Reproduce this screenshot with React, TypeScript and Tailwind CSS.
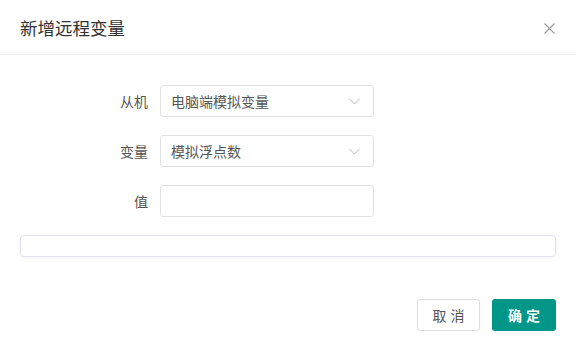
const font = { fontFamily: '"Noto Sans CJK SC", "Noto Sans", sans-serif' };

type RowProps = {
  label: string;
  value?: string;
  select?: boolean;
};

const Chevron = () => (
  <svg width="11" height="7" viewBox="0 0 11 7" className="text-[#b8b8b8]">
    <path d="M0.5 1 L5.5 6 L10.5 1" fill="none" stroke="currentColor" strokeWidth="1" />
  </svg>
);

const FormRow = ({ label, value, select }: RowProps) => (
  <div className="flex items-center">
    <label className="w-[128px] text-right text-[14px] text-[#555]">{label}</label>
    <div className="ml-3 flex h-[32px] w-[214px] items-center justify-between rounded-[3px] border border-[#e2e2e2] bg-white pl-[10px] pr-[13px]">
      <span className="text-[14px] text-[#555]">{value ?? ""}</span>
      {select && <Chevron />}
    </div>
  </div>
);

export default function App() {
  return (
    <div className="flex h-[349px] w-[576px] flex-col bg-white" style={font}>
      <div className="flex h-[55px] items-center justify-between border-b border-[#eeeeee] pl-5 pr-[21px] pt-[3px]">
        <h2 className="text-[17.5px] text-[#333]">新增远程变量</h2>
        <svg width="11" height="11" viewBox="0 0 11 11" className="text-[#999]">
          <path d="M0.5 0.5 L10.5 10.5 M10.5 0.5 L0.5 10.5" stroke="currentColor" strokeWidth="1.1" />
        </svg>
      </div>
      <div className="flex flex-col px-5">
        <div className="mt-[30px] flex flex-col gap-[18px]">
          <FormRow label="从机" value="电脑端模拟变量" select />
          <FormRow label="变量" value="模拟浮点数" select />
          <FormRow label="值" />
        </div>
        <div className="mt-[18px] h-[22px] w-full rounded-[4px] border border-[#e3e3ee] bg-white shadow-[0_1px_6px_rgba(0,0,0,0.05)]" />
        <div className="mt-[42px] flex justify-end gap-[12px]">
          <button className="h-[32px] w-[63px] rounded-[3px] border border-[#dedede] bg-white text-[14px] tracking-[4px] text-[#555]">
            <span className="pl-[4px]">取消</span>
          </button>
          <button className="h-[32px] w-[64px] rounded-[3px] bg-[#009688] text-[14px] font-bold tracking-[4px] text-white">
            <span className="pl-[4px]">确定</span>
          </button>
        </div>
      </div>
    </div>
  );
}
